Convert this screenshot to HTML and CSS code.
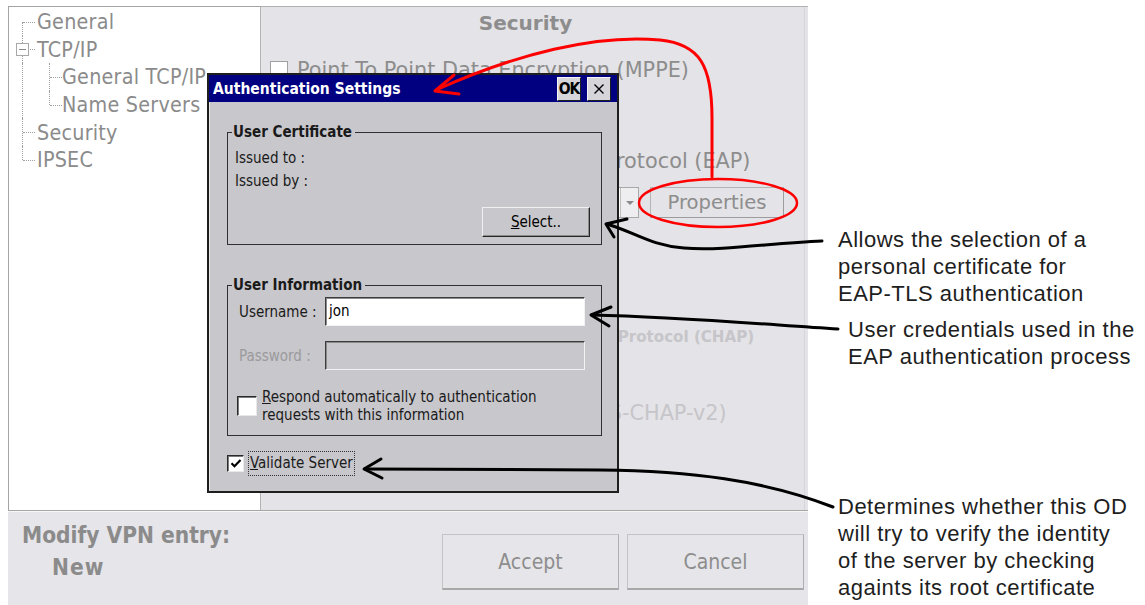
FILE: index.html
```html
<!DOCTYPE html>
<html lang="en">
<head>
<meta charset="utf-8">
<title>VPN entry – Authentication Settings</title>
<link rel="stylesheet" href="styles.css">
</head>
<body>
<div class="page">

  <div class="screen">
    <div class="main">
      <div class="tree">
        <div class="row"><span class="rail first"></span><span class="label">General</span></div>
        <div class="row"><span class="rail"><span class="toggle"></span></span><span class="label">TCP/IP</span></div>
        <div class="row"><span class="rail pass"></span><span class="rail child"></span><span class="label">General TCP/IP</span></div>
        <div class="row"><span class="rail pass"></span><span class="rail child last"></span><span class="label">Name Servers</span></div>
        <div class="row"><span class="rail"></span><span class="label">Security</span></div>
        <div class="row"><span class="rail last"></span><span class="label">IPSEC</span></div>
      </div>

      <div class="pane">
        <div class="pane-title">Security</div>
        <div class="opt opt-mppe"><span class="box"></span><span>Point To Point Data Encryption (MPPE)</span></div>
        <div class="opt opt-eap"><span class="box"></span><span>Extensible Authentication Protocol (EAP)</span></div>
        <div class="combo-row">
          <div class="combo"><span class="combo-btn"><span class="tri"></span></span></div>
          <div class="btn-flat">Properties</div>
        </div>
        <div class="opt opt-chap dim"><span class="box"></span><span>Challenge Handshake Authentication Protocol (CHAP)</span></div>
        <div class="opt opt-ms dim"><span class="box"></span><span>Microsoft CHAP Version 2 (MS-CHAP-v2)</span></div>
      </div>
    </div>

    <div class="footer">
      <div class="status">
        <div class="status-line">Modify VPN entry:</div>
        <div class="status-line status-sub">New</div>
      </div>
      <div class="actions">
        <div class="btn-big">Accept</div>
        <div class="btn-big">Cancel</div>
      </div>
    </div>
  </div>

  <div class="dialog">
    <div class="titlebar">
      <span class="title">Authentication Settings</span>
      <span class="cap-btn cap-ok">OK</span>
      <span class="cap-btn cap-x">
        <svg width="12" height="12" viewBox="0 0 12 12"><path d="M1.5 1.5 L10.5 10.5 M10.5 1.5 L1.5 10.5" stroke="#000" stroke-width="1.4" fill="none"/></svg>
      </span>
    </div>
    <div class="dlg-body">
      <div class="group group-cert">
        <div class="group-title">User Certificate</div>
        <div class="line">Issued to :</div>
        <div class="line">Issued by :</div>
        <div class="btn-row"><div class="btn-3d"><u>S</u>elect..</div></div>
      </div>

      <div class="group group-user">
        <div class="group-title">User Information</div>
        <div class="field">
          <span class="field-label">Username :</span>
          <span class="input">jon</span>
        </div>
        <div class="field field-off">
          <span class="field-label">Password :</span>
          <span class="input input-off"></span>
        </div>
        <div class="check-row">
          <span class="check"></span>
          <span class="check-text"><u>R</u>espond automatically to authentication<br>requests with this information</span>
        </div>
      </div>

      <div class="validate-row">
        <span class="check check-small">
          <svg width="12" height="11" viewBox="0 0 12 11"><path d="M1.5 5.2 L4.5 8.2 L10.5 2" stroke="#000" stroke-width="2.2" fill="none"/></svg>
        </span>
        <span class="focus-label"><u>V</u>alidate Server</span>
      </div>
    </div>
  </div>

  <svg class="marks" width="1145" height="605" viewBox="0 0 1145 605">
    <g fill="none" stroke-linecap="round" stroke-linejoin="round">
      <ellipse cx="718" cy="203" rx="79" ry="24" stroke="#ff0000" stroke-width="2.5"/>
      <path d="M712 177 L712 118 C712 66 700 44 660 40 C596 34 516 54 436 90" stroke="#ff0000" stroke-width="3"/>
      <path d="M454 75 L435 91 L459 94" stroke="#ff0000" stroke-width="3"/>

      <path d="M822 241 C770 243 724 251 684 248 C652 246 634 232 607 224" stroke="#000" stroke-width="3"/>
      <path d="M627 219 L606 224 L614 237" stroke="#000" stroke-width="3"/>

      <path d="M838 329 C760 324 680 317 592 315" stroke="#000" stroke-width="3"/>
      <path d="M611 307 L591 315 L609 326" stroke="#000" stroke-width="3"/>

      <path d="M833 507 C764 480 690 471 600 470 L365 469" stroke="#000" stroke-width="3"/>
      <path d="M381 459 L364 469 L382 478" stroke="#000" stroke-width="3"/>
    </g>
  </svg>

  <div class="note note-cert">Allows the selection of a<br>personal certificate for<br>EAP-TLS authentication</div>
  <div class="note note-user">User credentials used in the<br>EAP authentication process</div>
  <div class="note note-server">Determines whether this OD<br>will try to verify the identity<br>of the server by checking<br>againts its root certificate</div>

</div>
</body>
</html>
```

FILE: styles.css
```css
* { box-sizing: border-box; }

html, body {
  margin: 0;
  padding: 0;
  background: #ffffff;
}

body {
  width: 1145px;
  height: 605px;
  overflow: hidden;
  font-family: "DejaVu Sans Condensed", "DejaVu Sans", sans-serif;
  font-stretch: condensed;
}

.page {
  position: relative;
  width: 1145px;
  height: 605px;
  padding: 6px 0 0 8px;
}

/* ---------- device screen ---------- */

.screen {
  width: 800px;
  height: 599px;
  display: flex;
  flex-direction: column;
}

.main {
  height: 504px;
  display: flex;
}

/* tree view */
.tree {
  width: 253px;
  background: #ffffff;
  border-top: 1px solid #a4a4a4;
  border-left: 1px solid #a4a4a4;
  border-right: 1px solid #b4b4b4;
  padding-top: 1px;
  color: #8b8b8b;
  font-size: 21.3px;
  letter-spacing: 0.25px;
}

.row {
  display: flex;
  align-items: center;
  height: 27.6px;
}

.rail {
  position: relative;
  flex: none;
  align-self: stretch;
  width: 28px;
}

.rail.pass { width: 27px; }
.rail.child { width: 26px; }

.rail::before {
  content: "";
  position: absolute;
  left: 13px;
  top: 0;
  bottom: 0;
  border-left: 1px dotted #a0a0a0;
}

.rail.first::before { top: 50%; }
.rail.last::before { bottom: 50%; }

.rail::after {
  content: "";
  position: absolute;
  left: 14px;
  top: 50%;
  width: 12px;
  border-top: 1px dotted #a0a0a0;
}

.rail.pass::after { display: none; }

.toggle {
  position: absolute;
  left: 7px;
  top: 50%;
  width: 13px;
  height: 13px;
  margin-top: -6px;
  border: 1px solid #a8a8a8;
  background: #ffffff;
  z-index: 1;
}

.toggle::after {
  content: "";
  position: absolute;
  left: 2px;
  right: 2px;
  top: 5px;
  border-top: 1px solid #8a8a8a;
}

.label {
  white-space: nowrap;
  line-height: 1;
}

/* right pane */
.pane {
  flex: 1;
  background: #e4e3e7;
  border-top: 1px solid #b0b0b0;
  padding-left: 9px;
  color: #8d8d8d;
  font-family: "DejaVu Sans", sans-serif;
  font-stretch: normal;
  font-size: 20.8px;
  display: flex;
  flex-direction: column;
  box-shadow: inset -3px 0 0 #e4e3e7, inset -4px 0 0 #d6d5d9;
}

.pane-title {
  height: 32px;
  line-height: 32px;
  text-align: center;
  padding-right: 27px;
  font-weight: bold;
  font-size: 20px;
}

.opt {
  display: flex;
  align-items: center;
  height: 20px;
  white-space: nowrap;
}

.opt .box {
  flex: none;
  width: 18px;
  height: 18px;
  margin-right: 9px;
  background: #ffffff;
  border: 1px solid #a0a0a0;
}

.opt-mppe { margin-top: 21px; }
.opt-eap { margin-top: 71px; padding-left: 33px; }
.opt-chap { margin-top: 109px; font-weight: bold; font-size: 15.1px; }
.opt-ms { margin-top: 56px; padding-left: 18px; }

.dim { color: #c6c5c9; }

.combo-row {
  display: flex;
  align-items: stretch;
  height: 31px;
  margin-top: 16px;
  margin-left: 26px;
}

.combo {
  width: 343px;
  background: #ffffff;
  border: 1px solid #a8a8a8;
  display: flex;
  justify-content: flex-end;
}

.combo-btn {
  width: 18px;
  background: #eeeef0;
  border-left: 1px solid #c0c0c0;
  display: flex;
  align-items: center;
  justify-content: center;
}

.tri {
  width: 0;
  height: 0;
  border-left: 4px solid transparent;
  border-right: 4px solid transparent;
  border-top: 4px solid #8a8a8a;
}

.btn-flat {
  margin-left: 11px;
  width: 134px;
  border: 1px solid #b4b4b4;
  border-right-color: #9c9c9c;
  border-bottom-color: #9c9c9c;
  display: flex;
  align-items: center;
  justify-content: center;
  font-size: 19.6px;
  color: #8d8d8d;
}

/* footer bar */
.footer {
  flex: 1;
  display: flex;
  background: #e6e5e9;
  border-top: 1px solid #a6a6a6;
  box-shadow: inset 0 1px 0 #f6f6f6;
  padding: 2px 4px 0 14px;
  color: #8b8b8b;
}

.status {
  font-weight: bold;
  font-size: 22.5px;
  padding-top: 9px;
}

.status-line {
  height: 26px;
  line-height: 26px;
  white-space: nowrap;
}

.status-sub {
  margin-top: 6px;
  padding-left: 30px;
  letter-spacing: 1px;
}

.actions {
  margin-left: auto;
  margin-top: 21px;
  display: flex;
  gap: 8px;
  align-self: flex-start;
}

.btn-big {
  width: 177px;
  height: 56px;
  display: flex;
  align-items: center;
  justify-content: center;
  border: 1px solid #c4c4c4;
  border-bottom: 2px solid #a8a8a8;
  border-right-color: #b0b0b0;
  font-size: 21px;
  color: #8d8d8d;
}

/* ---------- dialog ---------- */

.dialog {
  position: absolute;
  left: 207px;
  top: 73px;
  width: 412px;
  height: 420px;
  background: #c8c7cb;
  border: 2px solid #1e1e1e;
  box-shadow: inset 1px 1px 0 #e6e6e6;
  color: #1a1a1a;
  font-size: 15px;
}

.titlebar {
  height: 27px;
  background: #000080;
  display: flex;
  align-items: center;
  padding: 0 6px 0 4px;
  gap: 6px;
}

.title {
  flex: 1;
  color: #ffffff;
  font-weight: bold;
  font-size: 15.5px;
  white-space: nowrap;
}

.cap-btn {
  width: 24px;
  height: 24px;
  background: #d6d5d9;
  border: 1px solid;
  border-color: #f4f4f4 #202020 #202020 #f4f4f4;
  display: flex;
  align-items: center;
  justify-content: center;
  color: #000;
}

.cap-ok {
  font-weight: bold;
  font-size: 15.5px;
  letter-spacing: -1px;
}

.dlg-body {
  padding: 0 15px 0 18px;
}

.group {
  border: 1px solid #303030;
  padding: 0 11px 0 7px;
}

.group-title {
  display: table;
  margin: -10px 0 0 -3px;
  padding: 0 3px 0 1px;
  height: 18px;
  line-height: 18px;
  background: #c8c7cb;
  font-weight: bold;
  white-space: nowrap;
}

.group-cert {
  margin-top: 30px;
  padding-bottom: 7px;
}

.line {
  height: 23px;
  line-height: 23px;
}

.group-title + .line { margin-top: 6px; }

.btn-row {
  display: flex;
  justify-content: flex-end;
  margin-top: 14px;
}

.btn-3d {
  width: 108px;
  height: 30px;
  border: 1px solid;
  border-color: #f0f0f0 #262626 #262626 #f0f0f0;
  box-shadow: inset -1px -1px 0 #8c8c8c;
  display: flex;
  align-items: center;
  justify-content: center;
  color: #000;
}

.group-user {
  margin-top: 40px;
  padding-bottom: 11px;
}

.field {
  display: flex;
  align-items: center;
  height: 29px;
  padding-left: 4px;
}

.group-title + .field { margin-top: 3px; }

.field + .field { margin-top: 15px; }

.field-label {
  width: 86px;
  flex: none;
  white-space: nowrap;
}

.field-off .field-label { color: #9a9a9d; }

.input {
  width: 260px;
  height: 29px;
  background: #ffffff;
  border: 1px solid;
  border-color: #3c3c3c #f2f2f2 #f2f2f2 #3c3c3c;
  box-shadow: inset 1px 1px 0 #8a8a8a;
  padding-left: 3px;
  line-height: 27px;
  color: #000;
}

.input-off { background: #c8c7cb; }

.check-row {
  display: flex;
  align-items: center;
  margin-top: 18px;
  padding-left: 2px;
}

.check {
  flex: none;
  width: 20px;
  height: 20px;
  background: #ffffff;
  border: 1px solid;
  border-color: #2a2a2a #e8e8e8 #e8e8e8 #2a2a2a;
  box-shadow: inset 1px 1px 0 #7a7a7a;
  display: flex;
  align-items: center;
  justify-content: center;
}

.check-text {
  margin-left: 5px;
  line-height: 18px;
}

.validate-row {
  display: flex;
  align-items: center;
  margin-top: 15px;
}

.check-small {
  width: 17px;
  height: 17px;
}

.focus-label {
  margin-left: 4px;
  padding: 2px 1px;
  border: 1px dotted #333;
  line-height: 19px;
  white-space: nowrap;
}

/* ---------- callouts ---------- */

.marks {
  position: absolute;
  left: 0;
  top: 0;
  pointer-events: none;
}

.note {
  position: absolute;
  font-family: "Liberation Sans", Arial, sans-serif;
  font-stretch: normal;
  font-size: 22px;
  letter-spacing: 0.5px;
  line-height: 27px;
  color: #1e1e1e;
  white-space: nowrap;
}

.note-cert { left: 838px; top: 226px; }
.note-user { left: 848px; top: 316px; }
.note-server { left: 838px; top: 493px; }
```
